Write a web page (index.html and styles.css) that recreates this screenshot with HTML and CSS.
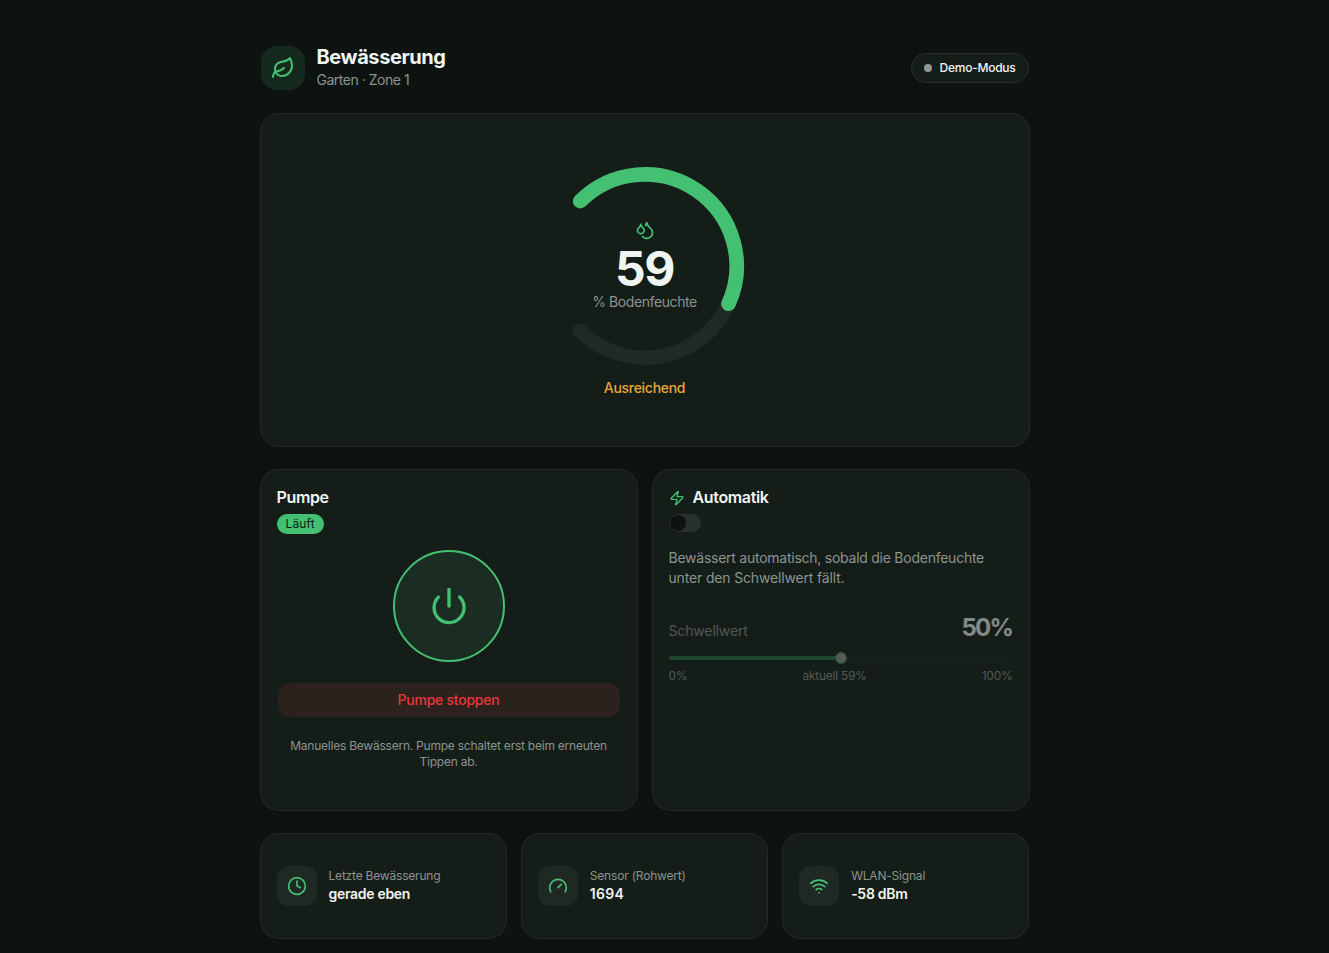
FILE: index.html
```
<!doctype html>
<html lang="de">
<head>
<meta charset="utf-8">
<title>Bewässerung</title>
<link rel="stylesheet" href="styles.css">
</head>

<body>
<div class="page">
	<header class="header">
		<div class="logo">
			<svg class="icon" width="24" height="24" viewBox="0 0 24 24"><path d="M11 20A7 7 0 0 1 9.8 6.1C15.5 5 17 4.48 19 2c1 2 2 4.18 2 8 0 5.5-4.78 10-10 10Z"/><path d="M2 21c0-3 1.85-5.36 5.08-6C9.5 14.52 12 13 13 12"/></svg>
		</div>
		<div class="heading">
			<h1>Bewässerung</h1>
			<p>Garten · Zone 1</p>
		</div>
		<div class="status"><i></i><span>Demo-Modus</span></div>
	</header>

	<section class="card hero">
		<div class="gauge">
			<svg class="ring" width="220" height="220" viewBox="0 0 240 240">
				<path class="track" d="M49.29 49.29A100 100 0 1 1 49.29 190.71"/>
				<path class="value" d="M49.29 49.29A100 100 0 0 1 211.14 161.15"/>
			</svg>
			<div class="reading">
				<svg class="icon" width="20" height="20" viewBox="0 0 24 24"><path d="M7 16.3c2.2 0 4-1.83 4-4.05 0-1.16-.57-2.26-1.71-3.19S7.29 6.75 7 5.3c-.29 1.45-1.14 2.84-2.29 3.76S3 11.1 3 12.25c0 2.22 1.8 4.05 4 4.05z"/><path d="M12.56 6.6A10.97 10.97 0 0 0 14 3.02c.5 2.5 2 4.9 4 6.5s3 3.5 3 5.5a6.98 6.98 0 0 1-11.91 4.97"/></svg>
				<strong>59</strong>
				<span class="unit">% Bodenfeuchte</span>
			</div>
		</div>
		<p class="verdict">Ausreichend</p>
	</section>

	<div class="row two">
		<section class="card pump">
			<h2>Pumpe</h2>
			<span class="badge">Läuft</span>
			<button class="power">
				<svg class="icon" width="40" height="40" viewBox="0 0 24 24"><path d="M12 2v10"/><path d="M18.4 6.6a9 9 0 1 1-12.77.04"/></svg>
			</button>
			<button class="stop">Pumpe stoppen</button>
			<p class="hint">Manuelles Bewässern. Pumpe schaltet erst beim erneuten<br>Tippen ab.</p>
		</section>

		<section class="card auto">
			<h2><svg class="icon" width="16" height="16" viewBox="0 0 24 24"><path d="M4 14a1 1 0 0 1-.78-1.63l9.9-10.2a.5.5 0 0 1 .86.46l-1.92 6.02A1 1 0 0 0 13 10h7a1 1 0 0 1 .78 1.63l-9.9 10.2a.5.5 0 0 1-.86-.46l1.92-6.02A1 1 0 0 0 11 14z"/></svg><span>Automatik</span></h2>
			<div class="switch"><i></i></div>
			<p class="desc">Bewässert automatisch, sobald die Bodenfeuchte<br><span>unter den Schwellwert fällt.</span></p>
			<div class="threshold">
				<div class="line"><span class="label">Schwellwert</span><b>50%</b></div>
				<div class="slider"><div class="fill" style="width:50%"></div><i></i></div>
				<div class="scale"><span>0%</span><span>aktuell 59%</span><span>100%</span></div>
			</div>
		</section>
	</div>

	<div class="row three">
		<section class="card stat">
			<div class="tile"><svg class="icon" width="20" height="20" viewBox="0 0 24 24"><circle cx="12" cy="12" r="10"/><path d="M12 6v6l4 2"/></svg></div>
			<div class="info"><span class="key">Letzte Bewässerung</span><span class="val">gerade eben</span></div>
		</section>
		<section class="card stat">
			<div class="tile"><svg class="icon" width="20" height="20" viewBox="0 0 24 24"><path d="m12 14 4-4"/><path d="M3.34 19a10 10 0 1 1 17.32 0"/></svg></div>
			<div class="info"><span class="key">Sensor (Rohwert)</span><span class="val number">1694</span></div>
		</section>
		<section class="card stat">
			<div class="tile"><svg class="icon" width="20" height="20" viewBox="0 0 24 24"><path d="M12 20h.01"/><path d="M2 8.82a15 15 0 0 1 20 0"/><path d="M5 12.859a10 10 0 0 1 14 0"/><path d="M8.5 16.429a5 5 0 0 1 7 0"/></svg></div>
			<div class="info"><span class="key">WLAN-Signal</span><span class="val">-58 dBm</span></div>
		</section>
	</div>
</div>
</body>
</html>
```

FILE: styles.css
```
*{margin:0; padding:0; box-sizing:border-box;}
html{background:#0d1311;}
body{height:953px; overflow:hidden; font-family:Inter, "Liberation Sans", sans-serif; font-size:14px; line-height:20px; color:#f0f5f1; background:#0d1311;}
button{font:inherit; border:0;}
.icon{display:block; fill:none; stroke:#44c072; stroke-width:2; stroke-linecap:round; stroke-linejoin:round;}

.page{width:768px; margin-left:260.5px; padding-top:46px; display:flex; flex-direction:column; gap:24px;}

.header{display:flex; align-items:center; height:44px;}
.logo{width:44px; height:44px; border-radius:16px; background:#152a1e; display:flex; align-items:center; justify-content:center;}
.heading{margin-left:12px; flex:1; padding-bottom:2px;}
.heading h1{font-size:20px; line-height:25px; font-weight:700; letter-spacing:-0.4px;}
.heading p{color:#8b948e; line-height:20px; letter-spacing:-0.48px;}
.status{display:flex; align-items:center; gap:8px; height:30px; padding:0 12px; border:1px solid #29302c; border-radius:15px; background:#151d19; font-size:12px; font-weight:500; letter-spacing:-0.25px;}
.status i{width:8px; height:8px; border-radius:50%; background:#8f9892;}

.card{background:#151d19; border-radius:18px; box-shadow:0 0 0 1px #242b27; padding:16px;}

.hero{height:332px; padding-top:42px; display:flex; flex-direction:column; align-items:center;}
.gauge{display:grid; width:220px; height:220px;}
.gauge > *{grid-area:1 / 1;}
.ring{fill:none; stroke-width:16; stroke-linecap:round;}
.track{stroke:#212925;}
.value{stroke:#44c072;}
.reading{display:flex; flex-direction:column; align-items:center; padding-top:64px;}
.reading strong{font-size:48px; line-height:46px; margin-top:6px; font-weight:700; letter-spacing:-1.5px;}
.unit{color:#8b948e; letter-spacing:-0.4px;}
.verdict{margin-top:2px; color:#e3a73a; font-weight:500; letter-spacing:-0.28px;}

.row{display:grid; gap:16px;}
.two{grid-template-columns:1fr 1fr; height:340px;}
.three{grid-template-columns:1fr 1fr 1fr; height:104px;}
h2{display:flex; align-items:center; gap:8px; margin-top:-1px; font-size:16px; line-height:24px; font-weight:600; letter-spacing:-0.35px;}
h2 .icon{position:relative; top:1px;}

.pump{display:flex; flex-direction:column; align-items:center;}
.pump h2{align-self:flex-start;}
.badge{align-self:flex-start; margin-top:5px; height:20px; padding:0 9px; border-radius:10px; background:#44c072; color:#0b1f13; font-size:12px; letter-spacing:0.15px;}
.power{width:112px; height:112px; margin-top:16px; border:2px solid #44c072; border-radius:50%; background:#1b2d22; display:flex; align-items:center; justify-content:center;}
.stop{width:342px; height:34px; margin-top:21px; border-radius:12px; background:#2b211d; color:#e5383b; font-weight:500; letter-spacing:-0.24px;}
.hint{margin-top:21px; font-size:12px; line-height:16px; color:#8b948e; text-align:center; letter-spacing:-0.23px;}

.switch{width:32px; height:18px; margin-top:5px; padding:1px; border-radius:9px; background:#28302c;}
.switch i{display:block; width:16px; height:16px; border-radius:50%; background:#0d1311;}
.desc{margin-top:16px; color:#8b948e; letter-spacing:-0.25px;}
.desc span{letter-spacing:-0.16px;}
.threshold{margin-top:24px; opacity:.5;}
.line{display:flex; justify-content:space-between; align-items:flex-end; height:32px;}
.label{color:#8b948e; height:23px; letter-spacing:-0.15px;}
.line b{font-size:24px; line-height:32px; font-weight:700; letter-spacing:-1.8px; margin-right:.5px;}
.slider{position:relative; height:4px; margin-top:12px; border-radius:2px; background:#1a221e;}
.fill{height:4px; border-radius:2px; background:#2c7145;}
.slider i{position:absolute; left:50%; top:-4px; width:12px; height:12px; margin-left:-6px; border-radius:50%; background:#949b96; border:1px solid #41805a;}
.scale{display:flex; justify-content:space-between; margin-top:8px; font-size:12px; line-height:16px; color:#8b948e; letter-spacing:-0.26px;}

.stat{display:flex; align-items:center; gap:12px;}
.tile{width:40px; height:40px; border-radius:12px; background:#202824; display:flex; align-items:center; justify-content:center;}
.info{display:flex; flex-direction:column; align-items:flex-start;}
.key{font-size:12px; line-height:16px; color:#8b948e; letter-spacing:-0.2px;}
.val{line-height:20px; font-weight:600; letter-spacing:-0.3px;}
.number{letter-spacing:0.3px;}
```
